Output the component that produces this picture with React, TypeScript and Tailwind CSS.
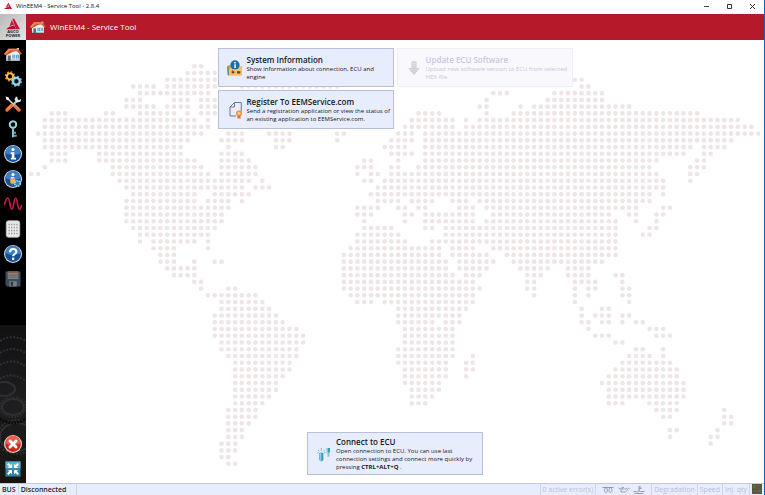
import type { ReactNode } from 'react'

// Dotted world map: one entry per row, each pair is [first column, last column]
const MAP_ROWS: [number, number][][] = [
  [[24, 25]],
  [[23, 27]],
  [[20, 27], [80, 81]],
  [[15, 18], [20, 27], [31, 45], [81, 82]],
  [[16, 26], [68, 70], [77, 84]],
  [[14, 16], [21, 23], [25, 27], [67, 67], [76, 84]],
  [[14, 18], [20, 23], [25, 27], [66, 67], [72, 72], [74, 88]],
  [[3, 5], [11, 12], [16, 21], [23, 23], [25, 27], [57, 60], [67, 67], [71, 98]],
  [[2, 24], [26, 26], [56, 62], [64, 64], [66, 104]],
  [[2, 26], [55, 62], [64, 106]],
  [[1, 25], [29, 31], [35, 38], [45, 46], [54, 56], [58, 107]],
  [[2, 23], [28, 31], [36, 38], [45, 45], [53, 56], [58, 103]],
  [[2, 22], [29, 29], [36, 37], [52, 55], [58, 97], [99, 102]],
  [[3, 5], [10, 22], [28, 31], [53, 56], [58, 96], [99, 100]],
  [[3, 5], [10, 24], [28, 32], [49, 50], [54, 54], [58, 92], [98, 99]],
  [[2, 2], [12, 25], [28, 33], [48, 50], [53, 54], [57, 91], [97, 99]],
  [[0, 1], [12, 26], [28, 33], [48, 48], [50, 51], [53, 92], [97, 98]],
  [[13, 32], [34, 34], [49, 50], [52, 93], [97, 97]],
  [[14, 31], [33, 35], [51, 93]],
  [[15, 24], [27, 32], [50, 91], [93, 93]],
  [[14, 24], [26, 29], [31, 31], [51, 54], [56, 59], [62, 64], [66, 91]],
  [[14, 29], [48, 51], [54, 55], [57, 58], [63, 65], [67, 89], [93, 94]],
  [[14, 28], [48, 50], [55, 56], [58, 65], [68, 85], [88, 89], [92, 93]],
  [[14, 28], [49, 49], [55, 55], [58, 65], [67, 86], [89, 89], [92, 92]],
  [[15, 27], [49, 53], [58, 59], [61, 86], [91, 92]],
  [[16, 26], [48, 54], [61, 86], [90, 91]],
  [[16, 16], [18, 24], [26, 26], [48, 55], [59, 86]],
  [[18, 21], [26, 26], [47, 60], [62, 65], [68, 86]],
  [[19, 21], [46, 60], [62, 67], [70, 86]],
  [[19, 21], [24, 24], [27, 28], [46, 61], [63, 68], [71, 84]],
  [[20, 24], [46, 61], [63, 67], [72, 76], [79, 82]],
  [[21, 24], [46, 62], [64, 66], [73, 75], [79, 82], [86, 87]],
  [[24, 25], [46, 65], [73, 74], [80, 83], [87, 87]],
  [[25, 25], [29, 30], [46, 66], [73, 74], [80, 80], [82, 83], [87, 88]],
  [[26, 33], [47, 65], [74, 74], [80, 80], [82, 82], [87, 88]],
  [[28, 34], [48, 50], [52, 65], [80, 80], [88, 88]],
  [[28, 35], [54, 64], [81, 81], [84, 85]],
  [[27, 36], [54, 63], [81, 81], [83, 85], [87, 88]],
  [[27, 37], [54, 59], [61, 63], [81, 82], [84, 85], [87, 87], [89, 90]],
  [[27, 39], [55, 62], [82, 82], [91, 93]],
  [[27, 40], [55, 62], [83, 85], [92, 94]],
  [[28, 40], [55, 62], [86, 87]],
  [[28, 39], [54, 62], [89, 90], [93, 93]],
  [[29, 39], [54, 62], [65, 65], [88, 91], [93, 93]],
  [[30, 38], [54, 61], [64, 65], [87, 94]],
  [[30, 38], [55, 61], [64, 65], [86, 95]],
  [[30, 37], [55, 61], [64, 64], [85, 95]],
  [[30, 36], [55, 60], [84, 96]],
  [[30, 36], [56, 60], [85, 96]],
  [[30, 35], [56, 59], [85, 96]],
  [[30, 34], [56, 58], [85, 87], [91, 95]],
  [[29, 33], [92, 95], [102, 102]],
  [[29, 33], [93, 94], [102, 103]],
  [[29, 32], [102, 103]],
  [[29, 31], [94, 95], [101, 101]],
  [[29, 31], [94, 94], [100, 101]],
  [[28, 30], [100, 100]],
  [[28, 30]],
  [[28, 29]],
  [[29, 30]],
]

function WorldMap() {
  return (
    <svg className="absolute inset-x-0 top-0 w-full" viewBox="0 0 738 443" aria-hidden="true">
      {MAP_ROWS.map((runs, row) =>
        runs.map(([from, to]) =>
          Array.from({ length: to - from + 1 }, (_, i) => (
            <circle
              key={`${row}-${from + i}`}
              cx={5.3 + (from + i) * 6.794}
              cy={26.2 + row * 6.74}
              r="2.3"
              fill="#eee5e6"
            />
          )),
        ),
      )}
    </svg>
  )
}

function AgcoMark({ className }: { className: string }) {
  return (
    <svg className={className} viewBox="0 0 24 18" aria-hidden="true">
      <path d="M11 0h3l10 18h-7z" fill="#c8142f" />
      <path d="M10 2l4 8-8 3z" fill="#d3173a" />
      <path d="M5 14l9-3 3 7H0z" fill="#b01029" />
    </svg>
  )
}

function HomeIcon() {
  return (
    <svg className="size-full" viewBox="0 0 24 24">
      <path d="M17 4h3v6h-3z" fill="#dfe8ec" />
      <path d="M3 11l9-6 9 6v10H3z" fill="#eef3f5" />
      <path d="M3 19h18v2H3z" fill="#aebcc4" />
      <path d="M0 12L6 5h13l5 7-2 1-5-5-5 1-9 5z" fill="#d9552b" />
      <path d="M6 5h13l1 2H8l-6 6-2-1z" fill="#f0885a" />
      <path d="M5 14h4v7H5z" fill="#5a6c78" />
      <path d="M11 13h4v5h-4zM16 13h4v5h-4z" fill="#4ba4c8" />
      <path d="M13 13v5M18 13v5" stroke="#e7f4fa" strokeWidth=".7" />
    </svg>
  )
}

function GearsIcon() {
  return (
    <svg className="size-full" viewBox="0 0 24 24" fill="none">
      <circle cx="8" cy="8.500" r="5.500" stroke="#d98a1d" strokeWidth="3" strokeDasharray="2.400 1.900" />
      <circle cx="8" cy="8.500" r="4" stroke="#f7bd55" strokeWidth="2.600" />
      <circle cx="16.500" cy="15" r="6" stroke="#5aaed0" strokeWidth="3" strokeDasharray="2.600 2.100" />
      <circle cx="16.500" cy="15" r="4.500" stroke="#9bd7ea" strokeWidth="3" />
      <circle cx="16.500" cy="15" r="3" stroke="#2e7fa6" strokeWidth=".8" />
    </svg>
  )
}

function ToolsIcon() {
  return (
    <svg className="size-full" viewBox="0 0 24 24" fill="none" strokeLinecap="round">
      <path d="M5 5l9 9" stroke="#d5dde2" strokeWidth="2.2" />
      <path d="M14 14l6 6" stroke="#f0702a" strokeWidth="4.6" />
      <path d="M15 14l5 5" stroke="#ffa269" strokeWidth="1.2" />
      <path d="M18 7l-8 8" stroke="#b5c2ca" strokeWidth="3" />
      <path d="M10 14l-6 6" stroke="#f0702a" strokeWidth="4.6" />
      <path d="M9 14l-5 5" stroke="#ffa269" strokeWidth="1.2" />
      <path d="M16 2l-2 4 3 4 5-1 1-4-3 2-2-1V3z" fill="#dfe6ea" />
      <path d="M2 2l4 1 1 3-2 1-2-1z" fill="#eef2f4" />
    </svg>
  )
}

function KeyIcon() {
  return (
    <svg className="size-full" viewBox="0 0 24 24" fill="none">
      <circle cx="12" cy="6" r="4.2" stroke="#86c8d8" strokeWidth="2.6" />
      <circle cx="12" cy="6" r="5" stroke="#c6ebf2" strokeWidth=".7" />
      <path d="M12 11v12" stroke="#8dcbd9" strokeWidth="2.6" />
      <path d="M13 17h3M13 21h4" stroke="#5fa9bd" strokeWidth="2.6" />
    </svg>
  )
}

function BlueDisc({ children }: { children: ReactNode }) {
  return (
    <svg className="size-full" viewBox="0 0 24 24">
      <circle cx="12" cy="12" r="12" fill="#cfdde8" />
      <circle cx="12" cy="12" r="10.6" fill="#174f96" />
      <path d="M2 11a10 10 0 0 1 20 0c-6 3-14 3-20 0z" fill="#3d7fc4" />
      {children}
    </svg>
  )
}

function InfoIcon() {
  return (
    <BlueDisc>
      <circle cx="12" cy="6" r="2.1" fill="#fff" />
      <path d="M9 9.5h4.8V17H16v2.4H9V17h1.4v-5H9z" fill="#fff" />
    </BlueDisc>
  )
}

function InfoGearIcon() {
  return (
    <BlueDisc>
      <circle cx="12" cy="6" r="2.1" fill="#fff" />
      <path d="M9 9.5h4.8V17H9z" fill="#fff" />
      <circle cx="12" cy="15" r="3.6" fill="#f2b45f" stroke="#d58c35" strokeWidth="1.6" strokeDasharray="1.6 1.2" />
      <circle cx="18" cy="18" r="3.6" fill="#2b84ad" stroke="#8fd3ec" strokeWidth="2.4" strokeDasharray="2 1" />
    </BlueDisc>
  )
}

function WaveIcon() {
  return (
    <svg className="size-full" viewBox="0 0 24 24" fill="none">
      <path
        d="M0 13C2 11 2 4 5 4s3 15 5.500 15S13 4 15.500 4 18 19 20.500 19c1.500 0 2-4 3-5"
        stroke="#c01843"
        strokeWidth="2.300"
        strokeLinecap="round"
      />
    </svg>
  )
}

function KeypadIcon() {
  return (
    <svg className="size-full" viewBox="0 0 24 24">
      <rect x="3" y="1" width="18" height="22" rx="3" fill="#e9e9e9" stroke="#bcbcbc" />
      {[6, 10, 14, 18].map((y) => (
        <path key={y} d={`M6 ${y}h12`} stroke="#8b8b8b" strokeWidth="1.8" strokeDasharray="1.5 2" />
      ))}
    </svg>
  )
}

function HelpIcon() {
  return (
    <BlueDisc>
      <path d="M8 9.5C8 4 16.5 4 16.5 9c0 3-4.3 3-4.3 6" fill="none" stroke="#fff" strokeWidth="2.8" />
      <circle cx="12.2" cy="18.5" r="1.7" fill="#fff" />
    </BlueDisc>
  )
}

function DiskIcon() {
  return (
    <svg className="size-full" viewBox="0 0 24 24">
      <path d="M2 2h20v20H4l-2-2z" fill="#3b4b60" />
      <path d="M5 2h14v10H5z" fill="#7d8183" />
      <path d="M5 2h14v2H5z" fill="#8a5a45" />
      <path d="M6 7h12M6 9.5h12" stroke="#5f6466" />
      <path d="M7 15h10v7H7z" fill="#777d80" />
      <path d="M9 16h3v5H9z" fill="#2c3643" />
    </svg>
  )
}

function CloseDiscIcon() {
  return (
    <svg className="size-full" viewBox="0 0 24 24">
      <circle cx="12" cy="12" r="12" fill="#e9d6d2" />
      <circle cx="12" cy="12" r="10.5" fill="#c92a1e" />
      <path d="M2 11a10 10 0 0 1 20 0c-6 3-14 3-20 0z" fill="#e5604f" />
      <path d="M8 8l8 8M16 8l-8 8" stroke="#fff" strokeWidth="3.8" strokeLinecap="round" />
    </svg>
  )
}

function ShrinkIcon() {
  return (
    <svg className="size-full" viewBox="0 0 24 24">
      <path d="M2 2h20v20H2z" fill="#2e87a6" />
      <path d="M2 2h20v9H2z" fill="#5fb0c9" />
      <path d="M5 5l5 5M19 5l-5 5M5 19l5-5M19 19l-5-5" stroke="#fff" strokeWidth="2.4" />
      <path d="M10.500 5v5.500H5zM13.500 5v5.500H19zM10.500 19v-5.500H5zM13.500 19v-5.500H19z" fill="#fff" />
    </svg>
  )
}

function FolderInfoIcon() {
  return (
    <svg className="size-4" viewBox="0 0 24 24" aria-hidden="true">
      <path d="M1 8h5l2 2h14v13H2z" fill="#e9a23a" />
      <path d="M4 12l19-3-1 14H4z" fill="#f7c163" />
      <path d="M0 10l2-1 1 14H1z" fill="#3b8fb5" />
      <circle cx="12" cy="7.5" r="7" fill="#1d6fa8" />
      <circle cx="12" cy="4" r="1.3" fill="#fff" />
      <path d="M11 6.5h2.2V12H11z" fill="#fff" />
      <path d="M3 14h19v9H3z" fill="#f7c163" />
      <path d="M7 17h4v3H7zM15 17h5v3h-5z" fill="#4a4747" />
      <path d="M8 15l1 2M16 20h3" stroke="#c8452e" strokeWidth="1.2" />
    </svg>
  )
}

function CertificateIcon() {
  return (
    <svg className="size-[18px]" viewBox="0 0 24 24" fill="none" aria-hidden="true">
      <path d="M12 20H4V8l6-6h9v12" stroke="#6d7488" strokeWidth="1.3" />
      <path d="M4 8h6V2" stroke="#6d7488" strokeWidth="1.3" />
      <path d="M14 18v6l2-1.5 2 1.5v-6z" fill="#e7672e" />
      <circle cx="16" cy="16.5" r="3" fill="#fbd28a" stroke="#f28a2e" strokeWidth="1.8" />
    </svg>
  )
}

function DownloadIcon() {
  return (
    <svg className="size-4" viewBox="0 0 24 24" aria-hidden="true">
      <path d="M8 3q4-3 8 0v9h5l-9 11-9-11h5z" fill="#d3d3da" />
      <path d="M9 5h6M9 8h6" stroke="#e7e7ed" />
    </svg>
  )
}

function PlugIcon() {
  return (
    <svg className="size-4" viewBox="0 0 24 24" aria-hidden="true">
      <path d="M5 10h6v11l-2 2H7l-2-2z" fill="#3b9dbd" />
      <path d="M6 10h2v12H6z" fill="#8bd0e3" />
      <path d="M3 6l2 2M8 3v4M13 6l-2 2M2 10h2M12 10h2" stroke="#6abdd6" strokeWidth="1.5" />
      <path d="M16 3h5v7h-5z" fill="#3b9dbd" />
      <path d="M17 10h3v6h-3z" fill="#76c3da" />
      <path d="M17 3h1v12h-1z" fill="#b4e2ee" />
    </svg>
  )
}

const TOP_TOOLS: { label: string; icon: ReactNode; disabled?: boolean }[] = [
  { label: 'Home', icon: <HomeIcon /> },
  { label: 'Settings', icon: <GearsIcon /> },
  { label: 'Service', icon: <ToolsIcon /> },
  { label: 'Access key', icon: <KeyIcon /> },
  { label: 'Information', icon: <InfoIcon /> },
  { label: 'System information', icon: <InfoGearIcon /> },
  { label: 'Measurements', icon: <WaveIcon /> },
  { label: 'Keypad', icon: <KeypadIcon /> },
  { label: 'Help', icon: <HelpIcon /> },
  { label: 'Save', icon: <DiskIcon />, disabled: true },
]

function GearBackdrop() {
  return (
    <svg className="absolute bottom-0 left-0 w-full" viewBox="0 0 26 160" fill="none" aria-hidden="true">
      <defs>
        <linearGradient id="haze" x1="0" y1="0" x2="0" y2="1">
          <stop offset="0" stopColor="#111113" />
          <stop offset=".5" stopColor="#1e1e20" />
          <stop offset="1" stopColor="#17140f" />
        </linearGradient>
      </defs>
      <path d="M0 2h26v158H0z" fill="url(#haze)" />
      <g stroke="#2f2f31">
        <path d="M0 18q12-8 26 0M0 30q12-8 26 0M0 42q14-8 26 2M0 56q12-8 26 2" strokeWidth="2" strokeDasharray="2 1.5" />
        <ellipse cx="4" cy="66" rx="11" ry="7" strokeWidth="2" />
        <ellipse cx="13" cy="84" rx="11" ry="8" strokeWidth="2" />
        <ellipse cx="13" cy="84" rx="13" ry="10" strokeWidth="2" strokeDasharray="1.5 1.5" />
        <ellipse cx="17" cy="114" rx="17" ry="14" strokeWidth="2" />
        <ellipse cx="17" cy="114" rx="20" ry="17" strokeWidth="2" strokeDasharray="2 1.5" />
      </g>
      <path d="M0 96q13 8 26 0" stroke="#0b0b0c" strokeWidth="3" strokeDasharray="2 1" />
    </svg>
  )
}

function ToolButton({ label, icon, disabled }: { label: string; icon: ReactNode; disabled?: boolean }) {
  return (
    <button className="flex h-[25px] w-full items-center justify-center" aria-label={label} disabled={disabled}>
      <span className="size-[18px]">{icon}</span>
    </button>
  )
}

function Sidebar() {
  return (
    <nav className="relative flex w-[26px] shrink-0 flex-col justify-between bg-black pt-px pb-0.5">
      <GearBackdrop />
      <div className="relative">
        {TOP_TOOLS.map((tool) => (
          <ToolButton key={tool.label} {...tool} />
        ))}
      </div>
      <div className="relative">
        <ToolButton label="Exit" icon={<CloseDiscIcon />} />
        <ToolButton label="Leave full screen" icon={<ShrinkIcon />} />
      </div>
    </nav>
  )
}

interface ActionCardProps {
  title: string
  icon: ReactNode
  disabled?: boolean
  children: ReactNode
}

function ActionCard({ title, icon, disabled, children }: ActionCardProps) {
  return (
    <button
      disabled={disabled}
      className="flex min-h-[39px] w-44 items-center border border-[#b9bfd8] bg-[#e8edfd] py-[3px] pl-2 text-left text-[#15161c] disabled:border-[#eff0f6] disabled:bg-[#f9f9fd] disabled:text-[#c6c6e0]"
    >
      <span className="w-5 shrink-0">{icon}</span>
      <span className="flex-1">
        <span className="block text-[8px] leading-[11px] font-semibold">{title}</span>
        <span className="block text-[6px] leading-[8px]">{children}</span>
      </span>
    </button>
  )
}

function TitleBar() {
  return (
    <div className="flex h-3.5 shrink-0 items-center bg-white pb-0.5 pl-1 text-[6px] text-[#111]">
      <AgcoMark className="mr-1 h-1.5 w-2" />
      <span className="flex-1">WinEEM4 - Service Tool - 2.8.4</span>
      <button className="flex w-[23px] justify-center" aria-label="Minimize">
        <svg className="size-[7px]" viewBox="0 0 7 7" stroke="#444"><path d="M1 3.5h5" /></svg>
      </button>
      <button className="flex w-[23px] justify-center" aria-label="Maximize">
        <svg className="size-[7px]" viewBox="0 0 7 7" stroke="#333" fill="none"><path d="M1.5 1.5h4v4h-4z" /></svg>
      </button>
      <button className="flex w-[23px] justify-center" aria-label="Close">
        <svg className="size-[7px]" viewBox="0 0 7 7" stroke="#333"><path d="M1 1l5 5M6 1L1 6" /></svg>
      </button>
    </div>
  )
}

function Header() {
  return (
    <header className="flex h-[26px] shrink-0 items-stretch bg-[#b51a2b] text-white">
      <div className="flex w-[26px] flex-col items-center bg-gradient-to-br from-[#b9b9bb] to-[#e6e6e6] pt-1">
        <AgcoMark className="h-3 w-3.5" />
        <span className="text-[4px] leading-[4px] font-bold text-[#222]">AGCO</span>
        <span className="text-[4px] leading-[4px] font-bold text-[#222]">POWER</span>
      </div>
      <div className="flex items-center pl-1">
        <span className="size-4"><HomeIcon /></span>
        <h1 className="pl-1 text-[8px]">WinEEM4 - Service Tool</h1>
      </div>
    </header>
  )
}

function StatusBar() {
  return (
    <footer className="flex h-3 shrink-0 items-stretch border-t border-[#c3c8dc] bg-[#e8edfd] text-[7px] leading-[11px] whitespace-nowrap text-[#bcc0d2]">
      <span className="border-r border-[#d0d5e8] px-0.5 font-semibold text-[#22242e]">BUS</span>
      <span className="w-[58px] border-r border-[#d0d5e8] px-0.5 font-semibold text-[#22242e]">Disconnected</span>
      <span className="ml-auto border-x border-[#d0d5e8] px-0.5">0 active error(s)</span>
      <span className="flex w-14 items-center justify-around border-r border-[#d0d5e8] px-1">
        <svg className="h-2 w-3" viewBox="0 0 24 16" fill="none" stroke="#8f93a3" strokeWidth="1.8" aria-hidden="true">
          <path d="M1 3h22M7 3c5 0 5 10 1 10s-4-8 0-10M16 3c5 0 5 10 1 10s-4-8 0-10" />
        </svg>
        <svg className="h-2 w-3" viewBox="0 0 24 16" fill="none" stroke="#9a9eae" strokeWidth="1.8" aria-hidden="true">
          <path d="M1 4l5 2v6h9l6-7h2M6 6h9l4-2M9 6V3M7 3h5" />
        </svg>
        <svg className="h-2 w-3" viewBox="0 0 24 16" fill="none" stroke="#8f93a3" strokeWidth="1.8" aria-hidden="true">
          <path d="M12 0v10M12 2h5M12 5h5M1 11h6q2 2 4 0t4 0h8M3 15h18" />
        </svg>
      </span>
      <span className="border-r border-[#d0d5e8] px-0.5">Degradation</span>
      <span className="border-r border-[#d0d5e8] px-0.5">Speed</span>
      <span className="border-r border-[#d0d5e8] px-0.5">Inj. qty</span>
      <svg className="mx-0.5 size-[10px]" viewBox="0 0 10 10" aria-hidden="true">
        <path d="M0 0h10v10H0z" fill="#59573f" />
        <path d="M1 1h3v3H1zM6 5h3v3H6z" fill="#3d7653" />
        <path d="M5 1h3v2H5zM2 6h3v2H2z" fill="#8b4d3c" />
      </svg>
    </footer>
  )
}

export default function App() {
  return (
    <div className="flex h-screen flex-col border-r border-[#1763b0] bg-white font-['Open_Sans','Noto_Sans',sans-serif]">
      <TitleBar />
      <Header />
      <div className="flex min-h-0 flex-1">
        <Sidebar />
        <main className="relative flex flex-1 flex-col items-center justify-between pt-2 pb-2">
          <WorldMap />
          <div className="relative grid grid-cols-2 gap-[3px]">
            <ActionCard title="System Information" icon={<FolderInfoIcon />}>
              Show information about connection, ECU and<br />engine
            </ActionCard>
            <ActionCard title="Update ECU Software" icon={<DownloadIcon />} disabled>
              Upload new software version to ECU from selected<br />HEX-file.
            </ActionCard>
            <ActionCard title="Register To EEMService.com" icon={<CertificateIcon />}>
              Send a registration application or view the status of<br />an existing application to EEMService.com.
            </ActionCard>
          </div>
          <div className="relative">
            <ActionCard title="Connect to ECU" icon={<PlugIcon />}>
              Open connection to ECU. You can use last<br />connection settings and connect more quickly by<br />pressing <b>CTRL+ALT+Q</b> .
            </ActionCard>
          </div>
        </main>
      </div>
      <StatusBar />
    </div>
  )
}
